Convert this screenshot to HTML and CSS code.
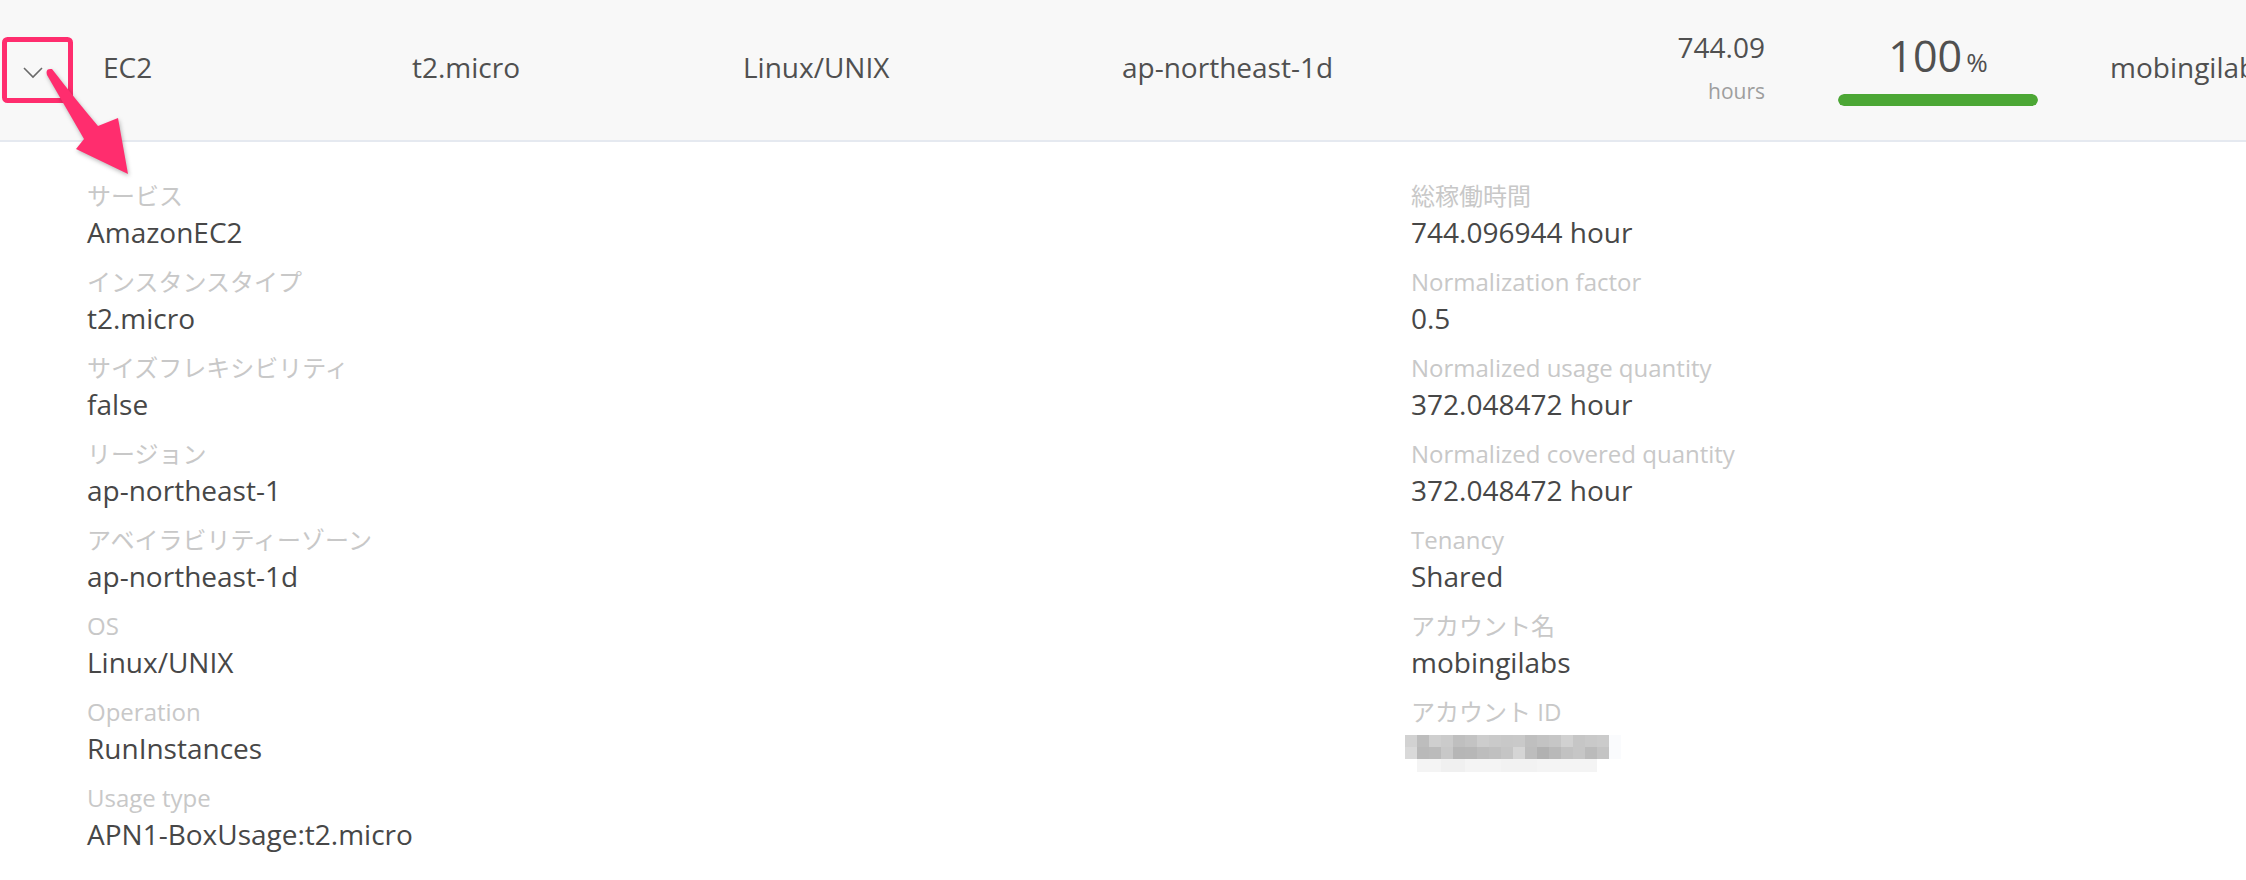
FILE: index.html
```html
<!DOCTYPE html>
<html lang="ja">
<head>
<meta charset="utf-8">
<title>Reservation coverage detail</title>
<link rel="stylesheet" href="styles.css">
</head>
<body>
<div class="page">
  <div class="summary">
    <div class="cell toggle">
      <svg class="chevron" width="20" height="12" viewBox="0 0 20 12"><polyline points="1,1 10,10 19,1" fill="none" stroke="#6a6a6a" stroke-width="1.6"/></svg>
    </div>
    <div class="cell c-service">EC2</div>
    <div class="cell c-type">t2.micro</div>
    <div class="cell c-os">Linux/UNIX</div>
    <div class="cell c-zone">ap-northeast-1d</div>
    <div class="cell c-hours">
      <div class="hours-num">744.09</div>
      <div class="hours-unit">hours</div>
    </div>
    <div class="cell c-cover">
      <div class="pct"><span class="pct-num">100</span><span class="pct-sign">%</span></div>
      <div class="bar"><div class="bar-fill" style="width:100%"></div></div>
    </div>
    <div class="cell c-account">mobingilabs</div>
  </div>

  <div class="details">
    <dl class="col">
      <div class="item"><dt>サービス</dt><dd>AmazonEC2</dd></div>
      <div class="item"><dt>インスタンスタイプ</dt><dd>t2.micro</dd></div>
      <div class="item"><dt>サイズフレキシビリティ</dt><dd>false</dd></div>
      <div class="item"><dt>リージョン</dt><dd>ap-northeast-1</dd></div>
      <div class="item"><dt>アベイラビリティーゾーン</dt><dd>ap-northeast-1d</dd></div>
      <div class="item"><dt>OS</dt><dd>Linux/UNIX</dd></div>
      <div class="item"><dt>Operation</dt><dd>RunInstances</dd></div>
      <div class="item"><dt>Usage type</dt><dd>APN1-BoxUsage:t2.micro</dd></div>
    </dl>
    <dl class="col">
      <div class="item"><dt>総稼働時間</dt><dd>744.096944 hour</dd></div>
      <div class="item"><dt>Normalization factor</dt><dd>0.5</dd></div>
      <div class="item"><dt>Normalized usage quantity</dt><dd>372.048472 hour</dd></div>
      <div class="item"><dt>Normalized covered quantity</dt><dd>372.048472 hour</dd></div>
      <div class="item"><dt>Tenancy</dt><dd>Shared</dd></div>
      <div class="item"><dt>アカウント名</dt><dd>mobingilabs</dd></div>
      <div class="item"><dt>アカウント ID</dt><dd>
        <svg class="redacted" width="216" height="40" viewBox="0 0 216 40">
          <g>
            <rect x="0" y="0" width="12" height="12" fill="#d2d2d2"/>
            <rect x="12" y="0" width="12" height="12" fill="#bdbdbd"/>
            <rect x="24" y="0" width="12" height="12" fill="#cfcfcf"/>
            <rect x="36" y="0" width="12" height="12" fill="#cbcbcb"/>
            <rect x="48" y="0" width="12" height="12" fill="#bfbfbf"/>
            <rect x="60" y="0" width="12" height="12" fill="#c3c3c3"/>
            <rect x="72" y="0" width="12" height="12" fill="#cdcdcd"/>
            <rect x="84" y="0" width="12" height="12" fill="#cacaca"/>
            <rect x="96" y="0" width="12" height="12" fill="#c8c8c8"/>
            <rect x="108" y="0" width="12" height="12" fill="#c9c9c9"/>
            <rect x="120" y="0" width="12" height="12" fill="#bfbfbf"/>
            <rect x="132" y="0" width="12" height="12" fill="#c3c3c3"/>
            <rect x="144" y="0" width="12" height="12" fill="#c6c6c6"/>
            <rect x="156" y="0" width="12" height="12" fill="#d1d1d1"/>
            <rect x="168" y="0" width="12" height="12" fill="#c6c6c6"/>
            <rect x="180" y="0" width="12" height="12" fill="#c9c9c9"/>
            <rect x="192" y="0" width="12" height="12" fill="#cbcbcb"/>
            <rect x="0" y="12" width="12" height="12" fill="#d9d9d9"/>
            <rect x="12" y="12" width="12" height="12" fill="#b9b9b9"/>
            <rect x="24" y="12" width="12" height="12" fill="#bbbbbb"/>
            <rect x="36" y="12" width="12" height="12" fill="#c8c8c8"/>
            <rect x="48" y="12" width="12" height="12" fill="#b6b6b6"/>
            <rect x="60" y="12" width="12" height="12" fill="#b7b7b7"/>
            <rect x="72" y="12" width="12" height="12" fill="#bdbdbd"/>
            <rect x="84" y="12" width="12" height="12" fill="#c0c0c0"/>
            <rect x="96" y="12" width="12" height="12" fill="#c5c5c5"/>
            <rect x="108" y="12" width="12" height="12" fill="#d5d5d5"/>
            <rect x="120" y="12" width="12" height="12" fill="#bdbdbd"/>
            <rect x="132" y="12" width="12" height="12" fill="#b1b1b1"/>
            <rect x="144" y="12" width="12" height="12" fill="#b9b9b9"/>
            <rect x="156" y="12" width="12" height="12" fill="#c2c2c2"/>
            <rect x="168" y="12" width="12" height="12" fill="#c6c6c6"/>
            <rect x="180" y="12" width="12" height="12" fill="#bbbbbb"/>
            <rect x="192" y="12" width="12" height="12" fill="#c4c4c4"/>
            <rect x="204" y="0" width="12" height="24" fill="#fafbfd"/>
            <rect x="12" y="24" width="180" height="13" fill="#f4f4f4"/>
            <rect x="36" y="24" width="24" height="13" fill="#f0f0f0"/>
            <rect x="96" y="24" width="36" height="13" fill="#f2f2f2"/>
          </g>
        </svg>
      </dd></div>
    </dl>
  </div>

  <svg class="annotation" width="150" height="190" viewBox="0 0 150 190">
    <rect x="4.5" y="39.5" width="66" height="61" rx="3" ry="3" fill="none" stroke="#ff2d6e" stroke-width="5"/>
    <path class="arrow" d="M47 75 Q45 68 52 69 Q76 100 98 126 L118 118 L128 174 L76 149 L84 139 Z" fill="#ff2d6e"/>
  </svg>
</div>
</body>
</html>
```

FILE: styles.css
```css
html, body {
  margin: 0;
  padding: 0;
  background: #ffffff;
  overflow: hidden;
}

.page {
  position: relative;
  width: 2246px;
  height: 880px;
  font-family: "Open Sans", "Noto Sans CJK JP", sans-serif;
  color: #505050;
}

.summary {
  display: flex;
  align-items: center;
  box-sizing: border-box;
  height: 142px;
  padding-bottom: 6px;
  background: #f8f8f8;
  border-bottom: 2px solid #e5e9f0;
  font-size: 28px;
  font-weight: 500;
  line-height: 40px;
  white-space: nowrap;
}

.cell {
  flex: none;
}

.toggle {
  width: 103px;
  align-self: flex-start;
  padding-top: 67px;
  box-sizing: border-box;
  padding-left: 23px;
}

.chevron {
  display: block;
}

.c-service { width: 309px; }
.c-type { width: 331px; }
.c-os { width: 379px; }
.c-zone { width: 478px; }

.c-hours {
  width: 165px;
  text-align: right;
  align-self: flex-start;
  padding-top: 25px;
}

.hours-num {
  line-height: 44px;
}

.hours-unit {
  font-size: 21px;
  font-weight: 400;
  line-height: 44px;
  color: #9e9e9e;
}

.c-cover {
  width: 200px;
  margin-left: 73px;
  align-self: flex-start;
  padding-top: 30px;
  text-align: center;
}

.pct {
  line-height: 52px;
  height: 52px;
}

.pct-num {
  font-size: 43px;
}

.pct-sign {
  font-size: 26px;
  margin-left: 4px;
}

.bar {
  margin-top: 12px;
  height: 12px;
  border-radius: 6px;
  background: #e8e8e8;
  overflow: hidden;
}

.bar-fill {
  height: 100%;
  background: #4ca735;
  border-radius: 6px;
}

.c-account {
  margin-left: 72px;
}

.details {
  display: grid;
  grid-template-columns: 1324px 1fr;
  padding: 37px 0 0 87px;
}

.col {
  margin: 0;
  display: flex;
  flex-direction: column;
  gap: 14px;
}

.item dt {
  font-size: 24px;
  line-height: 34px;
  height: 34px;
  color: #c8c8c8;
}

.item dd {
  margin: 0;
  font-size: 28px;
  font-weight: 500;
  line-height: 38px;
  height: 38px;
  color: #474747;
}

.redacted {
  display: block;
  margin: 6px 0 0 -6px;
  filter: blur(0.6px);
}

.annotation {
  position: absolute;
  left: 0;
  top: 0;
  overflow: visible;
}

.arrow {
  filter: drop-shadow(1px 2px 2px rgba(0, 0, 0, 0.28));
}
```
